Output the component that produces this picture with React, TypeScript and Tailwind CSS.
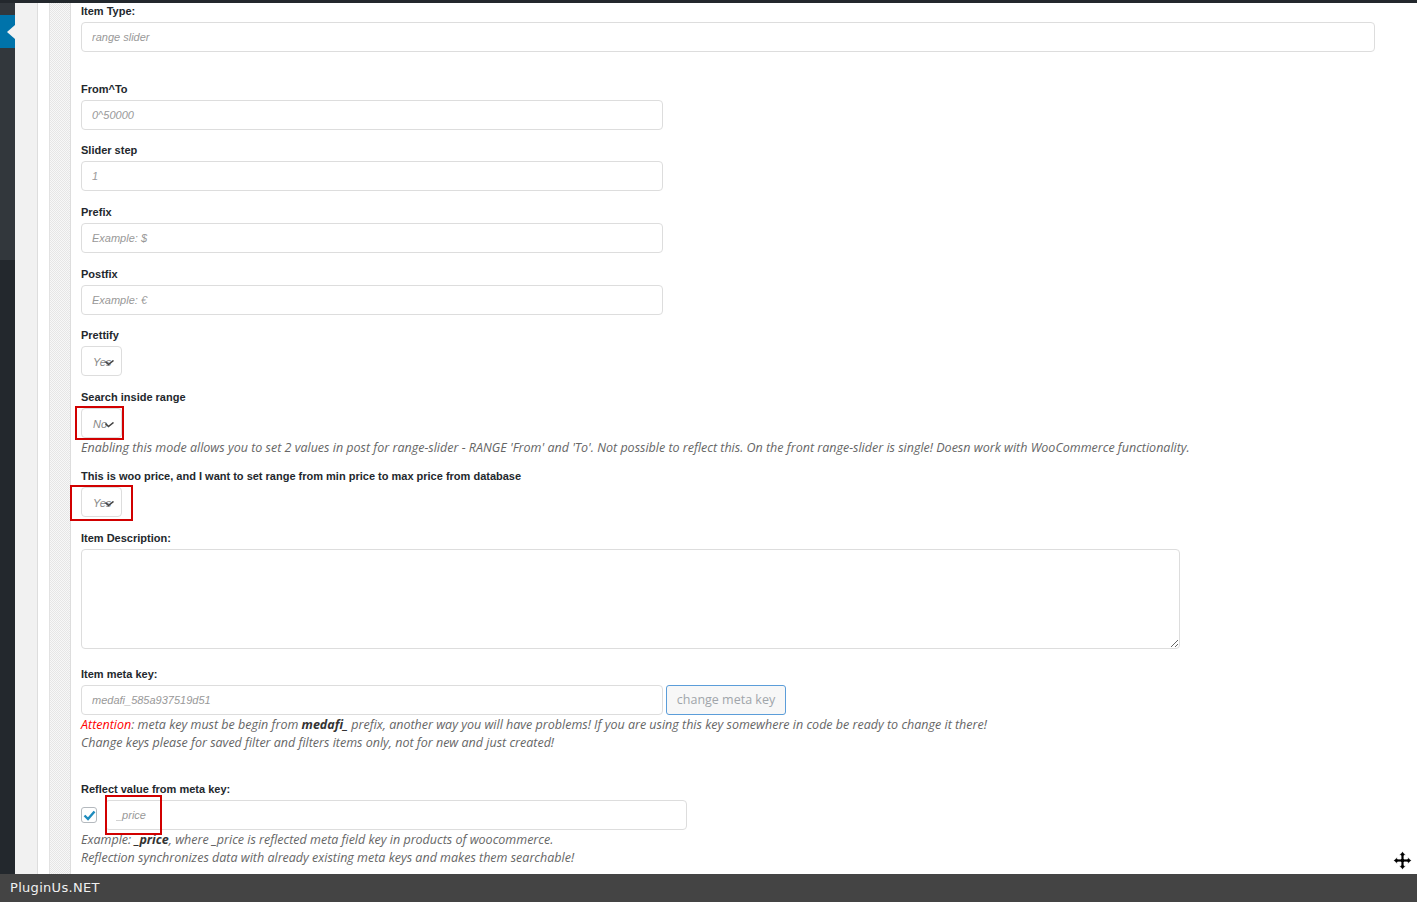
import React from "react";

const label = "block h-4 leading-4 text-[11px] font-bold text-[#23282d] font-['Liberation_Sans',Arial,sans-serif]";
const help = "text-[12.5px] leading-[18px] italic text-[#666] font-['Open_Sans',sans-serif] whitespace-nowrap";
const field =
  "block h-[30px] rounded-[4px] border border-[#ddd] bg-white px-[10px] text-[11px] italic text-[#555] outline-none placeholder:text-[#999] font-['Liberation_Sans',Arial,sans-serif]";

const TextField = ({ placeholder, wide }: { placeholder: string; wide?: boolean }) => (
  <input readOnly placeholder={placeholder} className={`${field} ${wide ? "w-[1294px]" : "w-[582px]"}`} />
);

const Chevron = () => (
  <svg width="9" height="6" viewBox="0 0 9 6" className="absolute left-[23px] top-[13px]">
    <path d="M0.5 1.5 L3.5 4.5 L8.5 0.5" fill="none" stroke="#444" strokeWidth="1.6" />
  </svg>
);

const Select = ({ value }: { value: string }) => (
  <div className="relative h-[30px] w-[41px] overflow-hidden rounded-[4px] border border-[#ddd] bg-white">
    <span className="absolute left-[11px] top-[7px] text-[11px] italic text-[#888] font-['Liberation_Sans',Arial,sans-serif]">
      {value}
    </span>
    <Chevron />
  </div>
);

const MoveCursor = () => (
  <svg width="19" height="19" viewBox="0 0 19 19" className="absolute right-[5px] top-[851px]">
    <path d="M9.5 0.5 L13 4.5 L11 4.5 L11 8 L14.5 8 L14.5 6 L18.5 9.5 L14.5 13 L14.5 11 L11 11 L11 14.5 L13 14.5 L9.5 18.5 L6 14.5 L8 14.5 L8 11 L4.5 11 L4.5 13 L0.5 9.5 L4.5 6 L4.5 8 L8 8 L8 4.5 L6 4.5 Z" fill="#000" stroke="#fff" strokeWidth="0.8" />
  </svg>
);

export default function App() {
  return (
    <div className="relative flex h-[902px] w-[1417px] flex-col overflow-hidden bg-white">
      <div className="h-[3px] bg-[#23282d]" />
      <div className="flex h-[871px]">
        {/* admin menu strip */}
        <div className="flex w-[15px] flex-col">
          <div className="h-[12px] bg-[#32373c]" />
          <div className="relative h-[33px] bg-[#0073aa]">
            <div className="absolute right-0 top-[10px] h-0 w-0 border-y-[7px] border-r-[8px] border-y-transparent border-r-[#f1f1f1]" />
          </div>
          <div className="h-[212px] bg-[#32373c]" />
          <div className="flex-1 bg-[#23282d]" />
        </div>
        <div className="w-[23px] border-r border-[#ddd] bg-[#f1f1f1]" />
        <div className="w-[12px] border-r border-[#e2e2e2] bg-white" />
        <div className="w-[21px] border-r border-[#ddd] bg-[conic-gradient(#e6e6e6_25%,#f8f8f8_0_50%,#e6e6e6_0_75%,#f8f8f8_0)] bg-[length:2px_2px]" />

        {/* item options */}
        <div className="flex flex-1 flex-col pl-[10px]">
          <span className={label}>Item Type:</span>
          <div className="mt-[3px]">
            <TextField placeholder="range slider" wide />
          </div>

          <span className={`${label} mt-[29px]`}>From^To</span>
          <div className="mt-[3px]"><TextField placeholder="0^50000" /></div>

          <span className={`${label} mt-[12px]`}>Slider step</span>
          <div className="mt-[3px]"><TextField placeholder="1" /></div>

          <span className={`${label} mt-[13px]`}>Prefix</span>
          <div className="mt-[3px]"><TextField placeholder="Example: $" /></div>

          <span className={`${label} mt-[13px]`}>Postfix</span>
          <div className="mt-[3px]"><TextField placeholder="Example: €" /></div>

          <span className={`${label} mt-[12px]`}>Prettify</span>
          <div className="mt-[3px]"><Select value="Yes" /></div>

          <span className={`${label} mt-[13px]`}>Search inside range</span>
          <div className="relative mt-[3px] w-[41px]">
            <Select value="No" />
            <div className="absolute -left-[6px] -right-[2px] -top-[2px] -bottom-[2px] border-2 border-[#d10000]" />
          </div>
          <p className={`${help} pt-[1px]`}>
            Enabling this mode allows you to set 2 values in post for range-slider - RANGE 'From' and 'To'. Not possible to reflect this. On the front range-slider is single! Doesn work with WooCommerce functionality.
          </p>

          <span className={`${label} mt-[11px]`}>
            This is woo price, and I want to set range from min price to max price from database
          </span>
          <div className="relative mt-[3px] w-[41px]">
            <Select value="Yes" />
            <div className="absolute -left-[11px] -right-[11px] -top-[2px] -bottom-[4px] border-2 border-[#d10000]" />
          </div>

          <span className={`${label} mt-[13px]`}>Item Description:</span>
          <textarea
            readOnly
            className="mt-[3px] h-[100px] w-[1099px] resize rounded-[4px] border border-[#ddd] bg-white outline-none"
          />

          <span className={`${label} mt-[17px]`}>Item meta key:</span>
          <div className="mt-[3px] flex gap-[3px]">
            <TextField placeholder="medafi_585a937519d51" />
            <button className="h-[30px] w-[120px] rounded-[3px] border border-[#5b9dd9] bg-[#f7f7f7] text-[12.5px] text-[#a0a5aa] font-['Open_Sans',sans-serif]">
              change meta key
            </button>
          </div>
          <p className={`${help} pt-[1px]`}>
            <span className="text-[#f00]">Attention</span>: meta key must be begin from{" "}
            <b className="text-[#333]">medafi_</b> prefix, another way you will have problems! If you are using this key somewhere in code be ready to change it there!
          </p>
          <p className={help}>Change keys please for saved filter and filters items only, not for new and just created!</p>

          <span className={`${label} mt-[29px]`}>Reflect value from meta key:</span>
          <div className="mt-[3px] flex items-center gap-[8px]">
            <div className="flex h-4 w-4 items-center justify-center rounded-[3px] border border-[#b4b9be] bg-white">
              <svg width="13" height="11" viewBox="0 0 13 11">
                <path d="M1.5 5.5 L5 9 L11.5 1.5" fill="none" stroke="#1e8cbe" strokeWidth="2.4" />
              </svg>
            </div>
            <div className="relative">
              <input readOnly placeholder="_price" className={`${field} w-[582px]`} />
              <div className="absolute left-0 -top-[5px] h-[40px] w-[57px] border-2 border-[#d10000]" />
            </div>
          </div>
          <p className={`${help} pt-[1px]`}>
            Example: <b className="text-[#333]">_price</b>, where _price is reflected meta field key in products of woocommerce.
          </p>
          <p className={help}>Reflection synchronizes data with already existing meta keys and makes them searchable!</p>
        </div>
      </div>

      <div className="flex h-[28px] items-center bg-[#444] pl-[10px] text-[13px] tracking-[0.3px] text-[#f0f0f0] font-['DejaVu_Sans',sans-serif]">
        PluginUs.NET
      </div>
      <MoveCursor />
    </div>
  );
}
